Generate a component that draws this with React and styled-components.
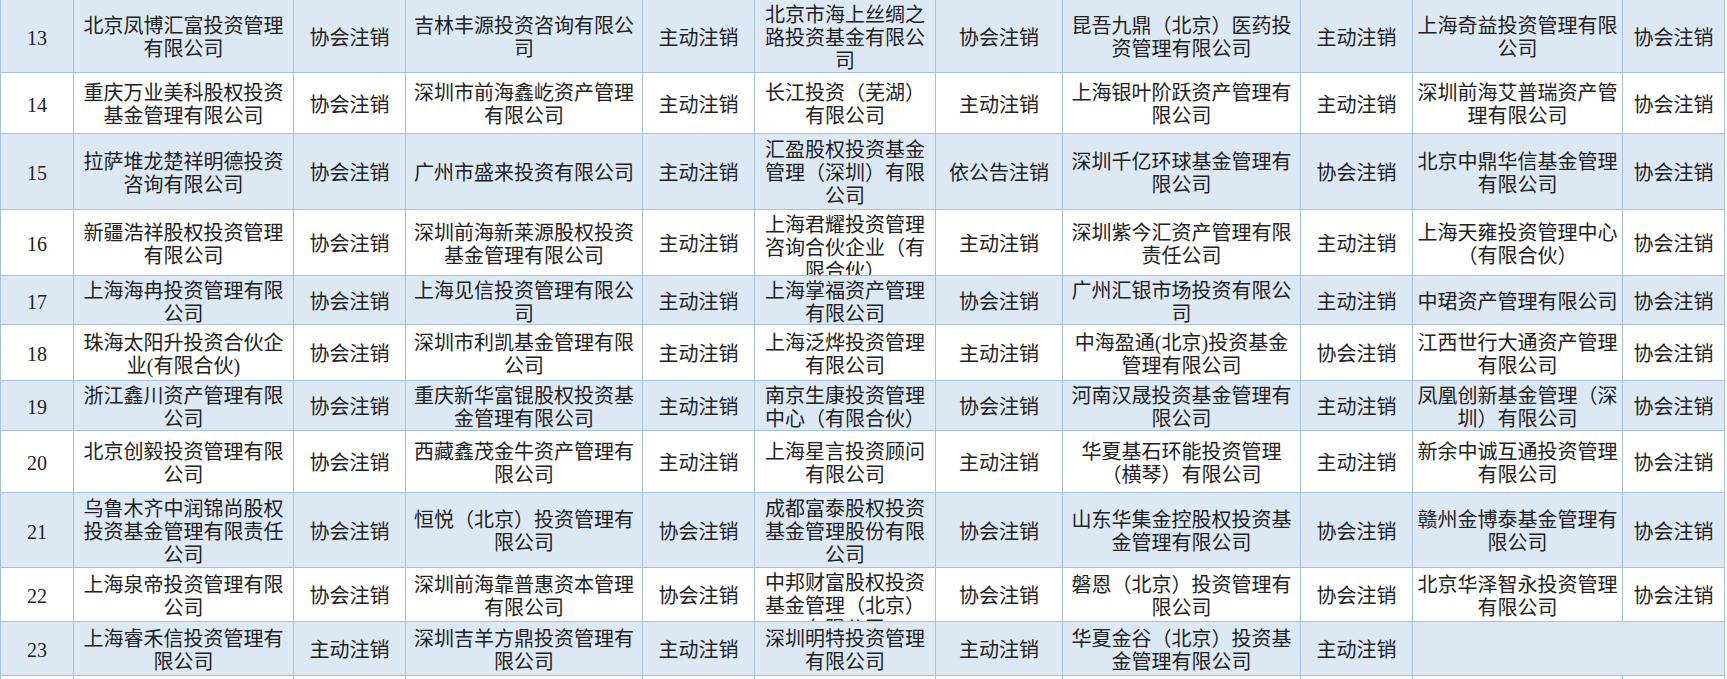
import styled, { createGlobalStyle } from 'styled-components';

const GlobalStyle = createGlobalStyle`
  html, body {
    margin: 0;
    padding: 0;
    background: #fff;
  }
  body {
    font-family: "Liberation Serif", "Noto Sans CJK SC", serif;
    color: #222;
    overflow: hidden;
  }
`;

// column widths, measured between the grid lines
const COLS = [73, 220, 112, 237, 112, 181, 127, 238, 112, 210, 102];

const ROWS = [
  {
    no: 13, h: 73,
    cells: ['北京凤博汇富投资管理有限公司', '协会注销', '吉林丰源投资咨询有限公司', '主动注销', '北京市海上丝绸之路投资基金有限公司', '协会注销', '昆吾九鼎（北京）医药投资管理有限公司', '主动注销', '上海奇益投资管理有限公司', '协会注销'],
  },
  {
    no: 14, h: 61,
    cells: ['重庆万业美科股权投资基金管理有限公司', '协会注销', '深圳市前海鑫屹资产管理有限公司', '主动注销', '长江投资（芜湖）有限公司', '主动注销', '上海银叶阶跃资产管理有限公司', '主动注销', '深圳前海艾普瑞资产管理有限公司', '协会注销'],
  },
  {
    no: 15, h: 76,
    cells: ['拉萨堆龙楚祥明德投资咨询有限公司', '协会注销', '广州市盛来投资有限公司', '主动注销', '汇盈股权投资基金管理（深圳）有限公司', '依公告注销', '深圳千亿环球基金管理有限公司', '协会注销', '北京中鼎华信基金管理有限公司', '协会注销'],
  },
  {
    no: 16, h: 66,
    cells: ['新疆浩祥股权投资管理有限公司', '协会注销', '深圳前海新莱源股权投资基金管理有限公司', '主动注销', '上海君耀投资管理咨询合伙企业（有限合伙）', '主动注销', '深圳紫今汇资产管理有限责任公司', '主动注销', '上海天雍投资管理中心（有限合伙）', '协会注销'],
  },
  {
    no: 17, h: 49,
    cells: ['上海海冉投资管理有限公司', '协会注销', '上海见信投资管理有限公司', '主动注销', '上海掌福资产管理有限公司', '协会注销', '广州汇银市场投资有限公司', '主动注销', '中珺资产管理有限公司', '协会注销'],
  },
  {
    no: 18, h: 56,
    cells: ['珠海太阳升投资合伙企业(有限合伙)', '协会注销', '深圳市利凯基金管理有限公司', '主动注销', '上海泛烨投资管理有限公司', '主动注销', '中海盈通(北京)投资基金管理有限公司', '协会注销', '江西世行大通资产管理有限公司', '协会注销'],
  },
  {
    no: 19, h: 50,
    cells: ['浙江鑫川资产管理有限公司', '协会注销', '重庆新华富锟股权投资基金管理有限公司', '主动注销', '南京生康投资管理中心（有限合伙）', '协会注销', '河南汉晟投资基金管理有限公司', '主动注销', '凤凰创新基金管理（深圳）有限公司', '协会注销'],
  },
  {
    no: 20, h: 62,
    cells: ['北京创毅投资管理有限公司', '协会注销', '西藏鑫茂金牛资产管理有限公司', '主动注销', '上海星言投资顾问有限公司', '主动注销', '华夏基石环能投资管理（横琴）有限公司', '主动注销', '新余中诚互通投资管理有限公司', '协会注销'],
  },
  {
    no: 21, h: 75,
    cells: ['乌鲁木齐中润锦尚股权投资基金管理有限责任公司', '协会注销', '恒悦（北京）投资管理有限公司', '协会注销', '成都富泰股权投资基金管理股份有限公司', '协会注销', '山东华集金控股权投资基金管理有限公司', '协会注销', '赣州金博泰基金管理有限公司', '协会注销'],
  },
  {
    no: 22, h: 54,
    cells: ['上海泉帝投资管理有限公司', '协会注销', '深圳前海靠普惠资本管理有限公司', '协会注销', '中邦财富股权投资基金管理（北京）有限公司', '协会注销', '磐恩（北京）投资管理有限公司', '协会注销', '北京华泽智永投资管理有限公司', '协会注销'],
  },
  {
    no: 23, h: 54,
    cells: ['上海睿禾信投资管理有限公司', '主动注销', '深圳吉羊方鼎投资管理有限公司', '主动注销', '深圳明特投资管理有限公司', '主动注销', '华夏金谷（北京）投资基金管理有限公司', '主动注销'],
  },
  { no: null, h: 54, cells: [] },
];

const Sheet = styled.div`
  width: 1727px;
  height: 679px;
  overflow: hidden;
`;

const Table = styled.table`
  width: 1725px;
  margin-top: -1px;
  table-layout: fixed;
  border-collapse: collapse;
  font-size: 20px;
  line-height: 23px;
`;

const Row = styled.tr`
  height: ${(p) => p.$h}px;
  background: ${(p) => (p.$shaded ? '#dde8f5' : '#ffffff')};
`;

const Cell = styled.td`
  border: 1px solid #a9c0da;
  padding: 4px 3px 0;
  text-align: center;
  vertical-align: middle;
  overflow: hidden;
`;

// long names are cut at the bottom of the row, as in the sheet
const Clip = styled.div`
  max-height: ${(p) => p.$h - 5}px;
  overflow: hidden;
`;

const SheetRow = ({ no, h, cells }) => {
  const filled = [String(no ?? ''), ...cells];
  const blanks = COLS.length - filled.length;

  return (
    <Row $h={h} $shaded={no !== null && no % 2 === 1}>
      {filled.map((text, i) => (
        <Cell key={i}>
          <Clip $h={h}>{text}</Clip>
        </Cell>
      ))}
      {no !== null && blanks > 0 && <Cell colSpan={blanks} />}
      {no === null &&
        COLS.slice(1).map((_, i) => <Cell key={`b${i}`} />)}
    </Row>
  );
};

const App = () => (
  <>
    <GlobalStyle />
    <Sheet>
      <Table>
        <colgroup>
          {COLS.map((w, i) => (
            <col key={i} style={{ width: w }} />
          ))}
        </colgroup>
        <tbody>
          {ROWS.map((row) => (
            <SheetRow key={row.no ?? 'tail'} {...row} />
          ))}
        </tbody>
      </Table>
    </Sheet>
  </>
);

export default App;
